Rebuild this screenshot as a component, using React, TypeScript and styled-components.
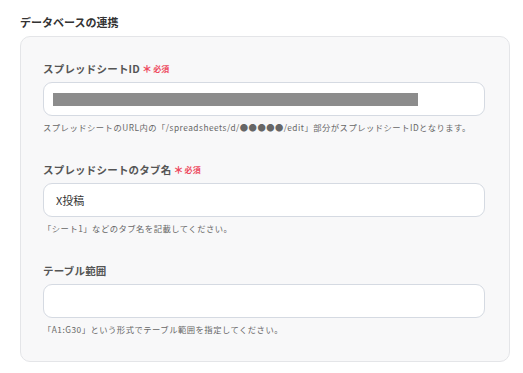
import React from "react"
import styled, { createGlobalStyle } from "styled-components"

const Global = createGlobalStyle`
  html, body {
    margin: 0;
    padding: 0;
    background: #ffffff;
  }
  body {
    font-family: "Noto Sans CJK JP", "Noto Sans", sans-serif;
    -webkit-font-smoothing: antialiased;
  }
`

const Page = styled.div`
  padding: 14px 13px 14px 20px;
`

const Title = styled.h2`
  margin: 0 0 6px;
  font-size: 11px;
  line-height: 16px;
  font-weight: 700;
  color: #333333;
`

const Card = styled.div`
  box-sizing: border-box;
  width: 490px;
  background: #f8f8f9;
  border: 1px solid #e4e5e8;
  border-radius: 10px;
  padding: 24px 24px 26px 22px;
  display: flex;
  flex-direction: column;
  gap: 29px;
`

const Section = styled.div`
  display: flex;
  flex-direction: column;
`

const Label = styled.div`
  display: flex;
  align-items: center;
  height: 14px;
  margin-bottom: 7px;
  font-size: 10.5px;
  font-weight: 700;
  letter-spacing: 0.2px;
  color: #555555;
`

const Required = styled.span`
  display: inline-flex;
  align-items: center;
  margin-left: 2px;
  font-size: 8px;
  font-weight: 700;
  color: #ee4a60;

  b {
    font-size: 10px;
    margin-right: 1px;
  }
`

const Field = styled.div`
  box-sizing: border-box;
  height: 34px;
  background: #ffffff;
  border: 1px solid #d5dae2;
  border-radius: 9px;
  padding: 0 12px 0 9px;
  display: flex;
  align-items: center;
  font-size: 11px;
  color: #333333;
`

const Redacted = styled.span`
  display: block;
  width: 365px;
  height: 13px;
  background: #8c8c8c;
`

const Help = styled.div`
  margin-top: 5px;
  height: 12px;
  line-height: 12px;
  font-size: 8.3px;
  letter-spacing: 0.5px;
  color: #666666;
  white-space: nowrap;
`

const Value = styled.span`
  padding-left: 3px;
`

const App = () => {
  return (
    <Page>
      <Global />
      <Title>データベースの連携</Title>
      <Card>
        <Section>
          <Label>
            スプレッドシートID
            <Required>
              <b>＊</b>必須
            </Required>
          </Label>
          <Field>
            <Redacted />
          </Field>
          <Help>
            スプレッドシートのURL内の「/spreadsheets/d/●●●●●/edit」部分がスプレッドシートIDとなります。
          </Help>
        </Section>
        <Section>
          <Label>
            スプレッドシートのタブ名
            <Required>
              <b>＊</b>必須
            </Required>
          </Label>
          <Field>
            <Value>X投稿</Value>
          </Field>
          <Help>「シート1」などのタブ名を記載してください。</Help>
        </Section>
        <Section>
          <Label>テーブル範囲</Label>
          <Field />
          <Help>「A1:G30」という形式でテーブル範囲を指定してください。</Help>
        </Section>
      </Card>
    </Page>
  )
}

export default App
